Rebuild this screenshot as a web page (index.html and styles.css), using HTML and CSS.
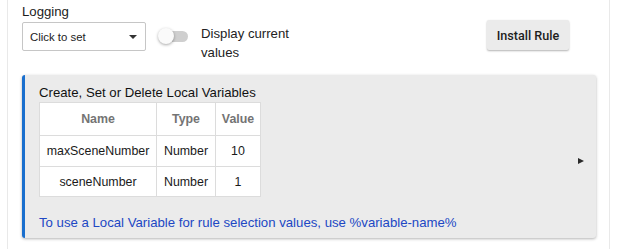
FILE: index.html
```html
<!DOCTYPE html>
<html lang="en">
<head>
    <meta charset="UTF-8">
    <title>Rule settings</title>
    <link rel="stylesheet" href="styles.css">
</head>
<body>
    <div class="card">
        <div class="toolbar">
            <div class="logging">
                <div class="field-label">Logging</div>
                <div class="select">
                    <span>Click to set</span>
                    <span class="caret"></span>
                </div>
            </div>
            <div class="switch">
                <span class="track"></span>
                <span class="thumb"></span>
            </div>
            <div class="switch-label">Display current values</div>
            <button class="install">Install Rule</button>
        </div>

        <div class="variables">
            <div class="variables-body">
                <div class="variables-title">Create, Set or Delete Local Variables</div>
                <table class="var-table">
                    <colgroup>
                        <col class="col-name">
                        <col class="col-type">
                        <col class="col-value">
                    </colgroup>
                    <thead>
                        <tr><th>Name</th><th>Type</th><th>Value</th></tr>
                    </thead>
                    <tbody>
                        <tr><td>maxSceneNumber</td><td>Number</td><td>10</td></tr>
                        <tr><td>sceneNumber</td><td>Number</td><td>1</td></tr>
                    </tbody>
                </table>
                <div class="hint">To use a Local Variable for rule selection values, use %variable-name%</div>
            </div>
            <span class="expand"></span>
        </div>
    </div>
</body>
</html>
```

FILE: styles.css
```css
body {
    margin: 0;
    background: #fff;
    font-family: "Liberation Sans", Arial, sans-serif;
    color: #1c1c1c;
}
.card {
    margin: 0 11px 0 7px;
    height: 249px;
    box-sizing: border-box;
    border-left: 1px solid #e9e9e9;
    border-right: 1px solid #e9e9e9;
    padding: 0 13px 0 14px;
}
.toolbar {
    display: flex;
    align-items: flex-start;
    height: 75px;
    padding-top: 4px;
    box-sizing: border-box;
}
.logging {
    width: 124px;
}
.field-label {
    font-size: 13.2px;
    line-height: 16px;
    margin-bottom: 2px;
}
.select {
    display: flex;
    align-items: center;
    justify-content: space-between;
    height: 29px;
    box-sizing: border-box;
    border: 1px solid #c6c6c6;
    border-radius: 2px;
    padding: 0 8px 0 7px;
    font-size: 11.4px;
    color: #222;
}
.caret {
    width: 0;
    height: 0;
    border-left: 4px solid transparent;
    border-right: 4px solid transparent;
    border-top: 4px solid #333;
    margin-top: 1px;
}
.switch {
    position: relative;
    width: 30px;
    height: 16px;
    margin: 24px 0 0 12px;
}
.track {
    position: absolute;
    left: 3px;
    top: 3px;
    width: 27px;
    height: 11px;
    border-radius: 6px;
    background: #cfcfcf;
}
.thumb {
    position: absolute;
    left: 0;
    top: 0;
    width: 16px;
    height: 16px;
    border-radius: 50%;
    background: #fafafa;
    box-shadow: 0 1px 3px rgba(0, 0, 0, 0.35);
}
.switch-label {
    width: 110px;
    margin: 20px 0 0 13px;
    font-size: 13.2px;
    line-height: 19px;
    color: #222;
}
.install {
    margin: 16px 27px 0 auto;
    width: 82px;
    height: 30px;
    border: none;
    border-radius: 2px;
    background: #ebebeb;
    box-shadow: 0 1px 2px rgba(0, 0, 0, 0.3);
    font-family: Roboto, sans-serif;
    font-weight: 500;
    font-size: 12.6px;
    color: #1e1e1e;
    padding: 0;
}
.variables {
    display: flex;
    background: #ebebeb;
    border-left: 3px solid #1a6fce;
    border-radius: 3px;
    box-shadow: 0 1px 3px rgba(0, 0, 0, 0.3);
    padding: 10px 12px 7px 14px;
}
.variables-body {
    flex: 1;
}
.variables-title {
    font-size: 13.2px;
    line-height: 16px;
    margin-bottom: 1px;
    color: #111;
}
.var-table {
    border-collapse: collapse;
    table-layout: fixed;
    width: 221px;
    background: #fff;
    font-size: 12.4px;
}
.col-name { width: 117px; }
.col-type { width: 59px; }
.col-value { width: 45px; }
.var-table th,
.var-table td {
    border: 1px solid #dcdcdc;
    text-align: center;
    padding: 0;
}
.var-table th {
    height: 32px;
    color: #747474;
    font-weight: bold;
}
.var-table td {
    height: 30px;
    color: #1a1a1a;
}
.var-table tbody tr:last-child td {
    height: 29px;
}
.hint {
    margin-top: 18px;
    font-size: 13.2px;
    line-height: 16px;
    color: #2047c4;
}
.expand {
    align-self: center;
    margin-top: 6px;
    width: 0;
    height: 0;
    border-top: 3.5px solid transparent;
    border-bottom: 3.5px solid transparent;
    border-left: 6px solid #2a2a2a;
}
```
